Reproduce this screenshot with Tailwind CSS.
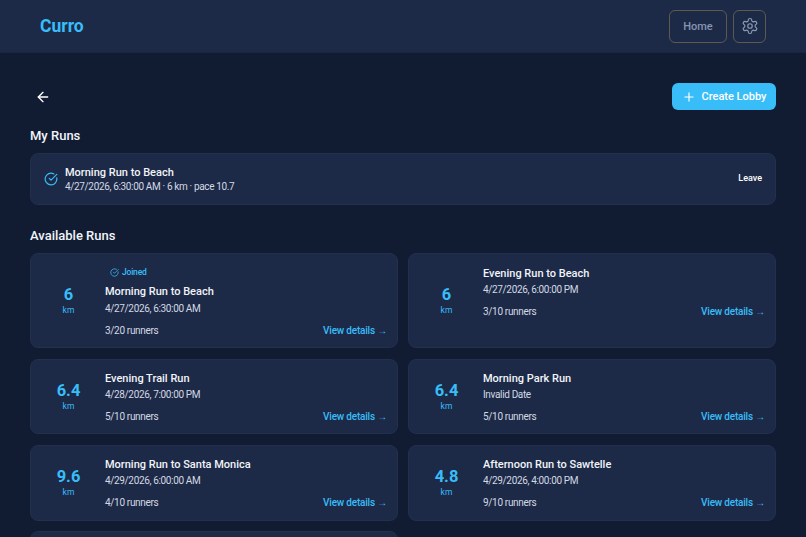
<!DOCTYPE html>
<html lang="en">
  <head>
    <meta charset="UTF-8" />
    <title>Curro</title>
    <script src="https://cdn.jsdelivr.net/npm/@tailwindcss/browser@4"></script>
  </head>
  <body class="bg-[#111c33] font-['Roboto',sans-serif] text-white h-[537px] overflow-hidden">
    <header class="h-[53px] bg-[#1d2a47] border-b border-[#1a2540] flex items-center justify-between pl-10 pr-10">
      <span class="pt-[1px] text-[17.5px] font-bold text-[#38bdf8]">Curro</span>
      <div class="flex items-center gap-[6px]">
        <button class="w-[58px] h-[33px] pt-[2px] rounded-md border border-[#5c5a4e] text-[11px] font-medium text-[#8494b3]">Home</button>
        <button class="w-[33px] h-[33px] rounded-md border border-[#5c5a4e] flex items-center justify-center text-[#8c99b3]">
          <svg class="w-[18px] h-[18px]" viewBox="0 0 24 24" fill="none" stroke="currentColor" stroke-width="1.6" stroke-linecap="round" stroke-linejoin="round">
            <path d="M12.22 2h-.44a2 2 0 0 0-2 2v.18a2 2 0 0 1-1 1.73l-.43.25a2 2 0 0 1-2 0l-.15-.08a2 2 0 0 0-2.73.73l-.22.38a2 2 0 0 0 .73 2.73l.15.1a2 2 0 0 1 1 1.72v.51a2 2 0 0 1-1 1.74l-.15.09a2 2 0 0 0-.73 2.73l.22.38a2 2 0 0 0 2.73.73l.15-.08a2 2 0 0 1 2 0l.43.25a2 2 0 0 1 1 1.73V20a2 2 0 0 0 2 2h.44a2 2 0 0 0 2-2v-.18a2 2 0 0 1 1-1.73l.43-.25a2 2 0 0 1 2 0l.15.08a2 2 0 0 0 2.73-.73l.22-.39a2 2 0 0 0-.73-2.73l-.15-.08a2 2 0 0 1-1-1.74v-.5a2 2 0 0 1 1-1.74l.15-.09a2 2 0 0 0 .73-2.73l-.22-.38a2 2 0 0 0-2.73-.73l-.15.08a2 2 0 0 1-2 0l-.43-.25a2 2 0 0 1-1-1.73V4a2 2 0 0 0-2-2z" />
            <circle cx="12" cy="12" r="3" />
          </svg>
        </button>
      </div>
    </header>

    <main class="px-[30px]">
      <div class="flex items-center justify-between mt-[30px] h-[27px]">
        <button class="ml-[5px] text-white">
          <svg class="w-4 h-4" viewBox="0 0 24 24" fill="none" stroke="currentColor" stroke-width="2" stroke-linecap="round" stroke-linejoin="round">
            <path d="M19 12H5" /><path d="m12 19-7-7 7-7" />
          </svg>
        </button>
        <button class="w-[104px] h-[27px] rounded-md bg-[#38bdf8] flex items-center justify-center gap-[6px] text-[11px] font-medium text-white">
          <svg class="w-[14px] h-[14px]" viewBox="0 0 24 24" fill="none" stroke="currentColor" stroke-width="2" stroke-linecap="round"><path d="M5 12h14" /><path d="M12 5v14" /></svg>
          <span class="pt-[2px]">Create Lobby</span>
        </button>
      </div>

      <h2 class="mt-[17px] text-[13px] leading-[18px] font-medium text-[#f1f4f9]">My Runs</h2>
      <div class="mt-[8px] h-[52px] rounded-lg bg-[#1d2a47] border border-[#222f4d] flex items-center justify-between pl-[13px] pr-[13px]">
        <div class="flex items-center gap-[7px]">
          <svg class="w-[14px] h-[14px] text-[#38bdf8]" viewBox="0 0 24 24" fill="none" stroke="currentColor" stroke-width="2" stroke-linecap="round" stroke-linejoin="round">
            <path d="M21.8 10A10 10 0 1 1 17 3.34" /><path d="m9 11 3 3L22 4" />
          </svg>
          <div>
            <p class="text-[11px] leading-[15px] font-medium text-[#f1f4f9]">Morning Run to Beach</p>
            <p class="text-[10px] leading-[14px] tracking-[-0.35px] text-[#d3d9e4]">4/27/2026, 6:30:00 AM · 6 km · pace 10.7</p>
          </div>
        </div>
        <button class="text-[9px] font-medium text-white">Leave</button>
      </div>

      <h2 class="mt-[22px] text-[13px] leading-[18px] font-medium text-[#f1f4f9]">Available Runs</h2>
      <div class="mt-[8px] grid grid-cols-2 gap-x-[10px] gap-y-[10.5px]">
        <article class="h-[95px] rounded-lg bg-[#1d2a47] border border-[#222f4d] flex items-center pl-[8px] pr-[10px]">
          <div class="w-[59px] shrink-0 text-center text-[#38bdf8]">
            <p class="text-[16.5px] leading-[20px] font-bold">6</p>
            <p class="text-[8.5px] leading-[11px]">km</p>
          </div>
          <div class="flex-1 min-w-0 ml-[7px] self-end pb-[9.5px]">
            <p class="flex items-center gap-[3px] ml-[5px] text-[8.5px] leading-[12px] tracking-[-0.2px] font-medium text-[#38bdf8]">
              <svg class="w-[9px] h-[9px]" viewBox="0 0 24 24" fill="none" stroke="currentColor" stroke-width="2" stroke-linecap="round" stroke-linejoin="round"><path d="M21.8 10A10 10 0 1 1 17 3.34" /><path d="m9 11 3 3L22 4" /></svg>
              Joined
            </p>
            <p class="mt-[6px] text-[11px] leading-[15px] font-medium text-[#f1f4f9]">Morning Run to Beach</p>
            <p class="mt-[2.5px] text-[10px] leading-[14px] tracking-[-0.35px] text-[#d3d9e4]">4/27/2026, 6:30:00 AM</p>
            <div class="mt-[8px] flex items-center justify-between">
              <span class="text-[10px] leading-[14px] tracking-[-0.33px] text-[#d3d9e4]">3/20 runners</span>
              <a class="text-[10px] leading-[14px] tracking-[-0.2px] font-medium text-[#38bdf8]">View details →</a>
            </div>
          </div>
        </article>

        <article class="h-[95px] rounded-lg bg-[#1d2a47] border border-[#222f4d] flex items-center pl-[8px] pr-[10px]">
          <div class="w-[59px] shrink-0 text-center text-[#38bdf8]">
            <p class="text-[16.5px] leading-[20px] font-bold">6</p>
            <p class="text-[8.5px] leading-[11px]">km</p>
          </div>
          <div class="flex-1 min-w-0 ml-[7px] pb-[16px]">
            <p class="text-[11px] leading-[15px] font-medium text-[#f1f4f9]">Evening Run to Beach</p>
            <p class="mt-[2.5px] text-[10px] leading-[14px] tracking-[-0.35px] text-[#d3d9e4]">4/27/2026, 6:00:00 PM</p>
            <div class="mt-[8px] flex items-center justify-between">
              <span class="text-[10px] leading-[14px] tracking-[-0.33px] text-[#d3d9e4]">3/10 runners</span>
              <a class="text-[10px] leading-[14px] tracking-[-0.2px] font-medium text-[#38bdf8]">View details →</a>
            </div>
          </div>
        </article>

        <article class="h-[75.75px] rounded-lg bg-[#1d2a47] border border-[#222f4d] flex items-center pl-[8px] pr-[10px]">
          <div class="w-[59px] shrink-0 text-center text-[#38bdf8]">
            <p class="text-[16.5px] leading-[20px] font-bold">6.4</p>
            <p class="text-[8.5px] leading-[11px]">km</p>
          </div>
          <div class="flex-1 min-w-0 ml-[7px] pt-[2px]">
            <p class="text-[11px] leading-[15px] font-medium text-[#f1f4f9]">Evening Trail Run</p>
            <p class="mt-[2.5px] text-[10px] leading-[14px] tracking-[-0.35px] text-[#d3d9e4]">4/28/2026, 7:00:00 PM</p>
            <div class="mt-[8px] flex items-center justify-between">
              <span class="text-[10px] leading-[14px] tracking-[-0.33px] text-[#d3d9e4]">5/10 runners</span>
              <a class="text-[10px] leading-[14px] tracking-[-0.2px] font-medium text-[#38bdf8]">View details →</a>
            </div>
          </div>
        </article>

        <article class="h-[75.75px] rounded-lg bg-[#1d2a47] border border-[#222f4d] flex items-center pl-[8px] pr-[10px]">
          <div class="w-[59px] shrink-0 text-center text-[#38bdf8]">
            <p class="text-[16.5px] leading-[20px] font-bold">6.4</p>
            <p class="text-[8.5px] leading-[11px]">km</p>
          </div>
          <div class="flex-1 min-w-0 ml-[7px] pt-[2px]">
            <p class="text-[11px] leading-[15px] font-medium text-[#f1f4f9]">Morning Park Run</p>
            <p class="mt-[2.5px] text-[10px] leading-[14px] tracking-[-0.35px] text-[#d3d9e4]">Invalid Date</p>
            <div class="mt-[8px] flex items-center justify-between">
              <span class="text-[10px] leading-[14px] tracking-[-0.33px] text-[#d3d9e4]">5/10 runners</span>
              <a class="text-[10px] leading-[14px] tracking-[-0.2px] font-medium text-[#38bdf8]">View details →</a>
            </div>
          </div>
        </article>

        <article class="h-[75.75px] rounded-lg bg-[#1d2a47] border border-[#222f4d] flex items-center pl-[8px] pr-[10px]">
          <div class="w-[59px] shrink-0 text-center text-[#38bdf8]">
            <p class="text-[16.5px] leading-[20px] font-bold">9.6</p>
            <p class="text-[8.5px] leading-[11px]">km</p>
          </div>
          <div class="flex-1 min-w-0 ml-[7px] pt-[2px]">
            <p class="text-[11px] leading-[15px] font-medium text-[#f1f4f9]">Morning Run to Santa Monica</p>
            <p class="mt-[2.5px] text-[10px] leading-[14px] tracking-[-0.35px] text-[#d3d9e4]">4/29/2026, 6:00:00 AM</p>
            <div class="mt-[8px] flex items-center justify-between">
              <span class="text-[10px] leading-[14px] tracking-[-0.33px] text-[#d3d9e4]">4/10 runners</span>
              <a class="text-[10px] leading-[14px] tracking-[-0.2px] font-medium text-[#38bdf8]">View details →</a>
            </div>
          </div>
        </article>

        <article class="h-[75.75px] rounded-lg bg-[#1d2a47] border border-[#222f4d] flex items-center pl-[8px] pr-[10px]">
          <div class="w-[59px] shrink-0 text-center text-[#38bdf8]">
            <p class="text-[16.5px] leading-[20px] font-bold">4.8</p>
            <p class="text-[8.5px] leading-[11px]">km</p>
          </div>
          <div class="flex-1 min-w-0 ml-[7px] pt-[2px]">
            <p class="text-[11px] leading-[15px] font-medium text-[#f1f4f9]">Afternoon Run to Sawtelle</p>
            <p class="mt-[2.5px] text-[10px] leading-[14px] tracking-[-0.35px] text-[#d3d9e4]">4/29/2026, 4:00:00 PM</p>
            <div class="mt-[8px] flex items-center justify-between">
              <span class="text-[10px] leading-[14px] tracking-[-0.33px] text-[#d3d9e4]">9/10 runners</span>
              <a class="text-[10px] leading-[14px] tracking-[-0.2px] font-medium text-[#38bdf8]">View details →</a>
            </div>
          </div>
        </article>

        <article class="h-[75.75px] rounded-lg bg-[#1d2a47] border border-[#222f4d]"></article>
      </div>
    </main>
  </body>
</html>
